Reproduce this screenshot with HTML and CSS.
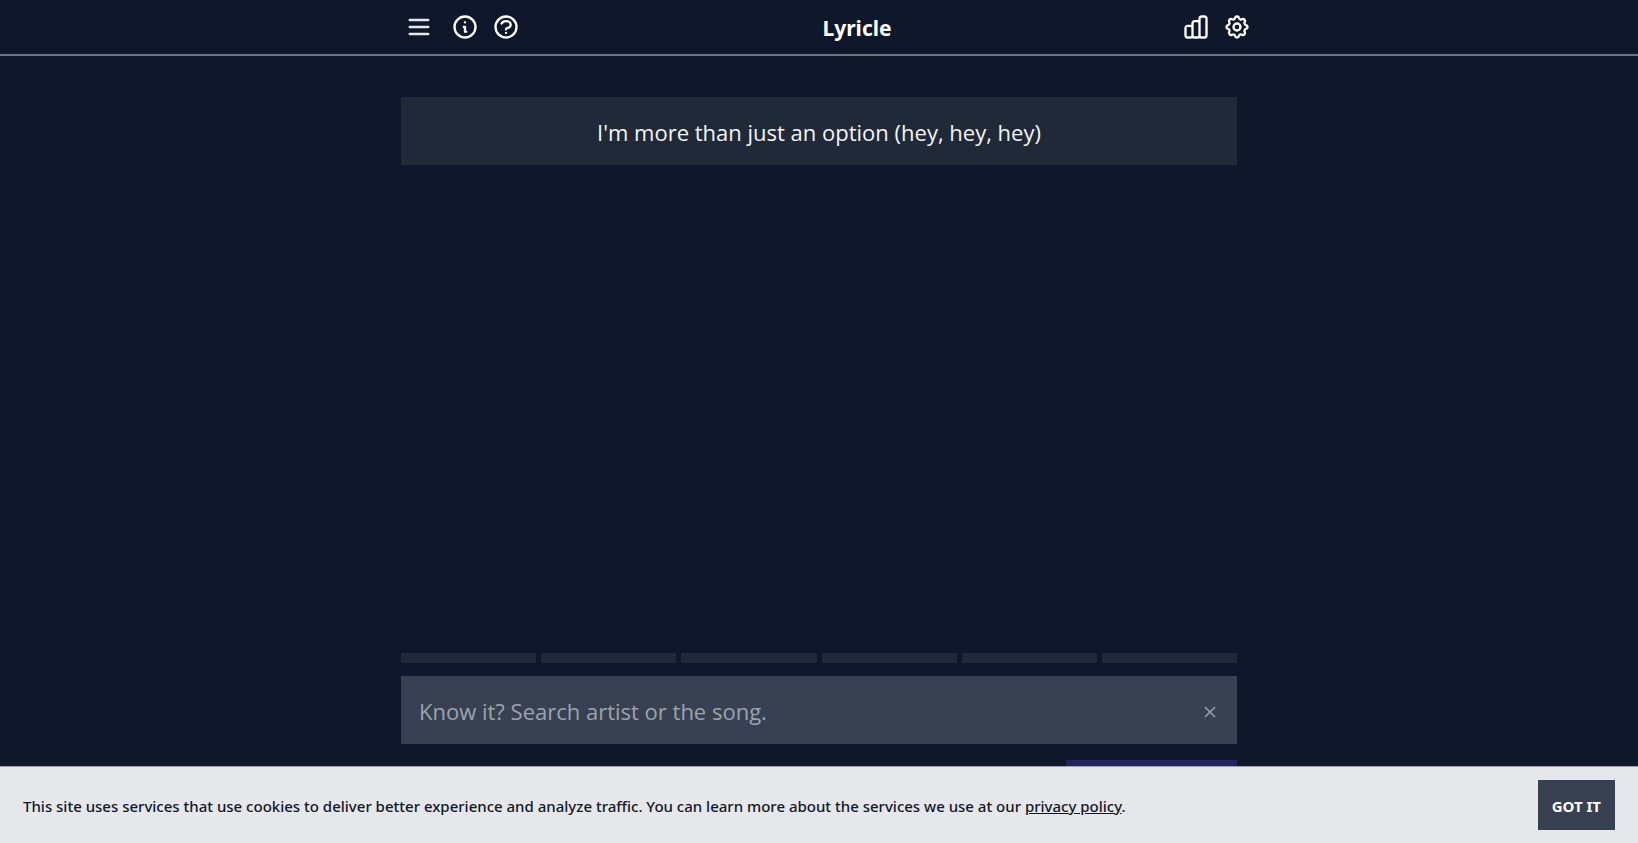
FILE: index.html
```html
<!DOCTYPE html>
<html lang="en">
<head>
<meta charset="utf-8">
<meta name="viewport" content="width=device-width, initial-scale=1">
<title>Lyricle</title>
<link rel="stylesheet" href="styles.css">
</head>
<body>
<header class="header">
  <div class="header-inner">
    <nav class="header-group" aria-label="Main">
      <button class="icon-button icon-button-menu" type="button" aria-label="Menu"><svg class="icon icon-menu" viewBox="0 0 24 24"><path d="M4 6h16M4 12h16M4 18h16"/></svg></button>
      <button class="icon-button" type="button" aria-label="About"><svg class="icon" viewBox="0 0 24 24"><path d="M13 16h-1v-4h-1m1-4h.01M21 12a9 9 0 11-18 0 9 9 0 0118 0z"/></svg></button>
      <button class="icon-button" type="button" aria-label="Help"><svg class="icon" viewBox="0 0 24 24"><path d="M8.228 9c.549-1.165 2.03-2 3.772-2 2.21 0 4 1.343 4 3 0 1.4-1.278 2.575-3.006 2.907-.542.104-.994.54-.994 1.093m0 3h.01M21 12a9 9 0 11-18 0 9 9 0 0118 0z"/></svg></button>
    </nav>
    <h1 class="title">Lyricle</h1>
    <div class="header-group">
      <button class="icon-button" type="button" aria-label="Statistics"><svg class="icon" viewBox="0 0 24 24"><path d="M9 19v-6a2 2 0 00-2-2H5a2 2 0 00-2 2v6a2 2 0 002 2h2a2 2 0 002-2zm0 0V9a2 2 0 012-2h2a2 2 0 012 2v10m-6 0a2 2 0 002 2h2a2 2 0 002-2m0 0V5a2 2 0 012-2h2a2 2 0 012 2v14a2 2 0 01-2 2h-2a2 2 0 01-2-2z"/></svg></button>
      <button class="icon-button" type="button" aria-label="Settings"><svg class="icon" viewBox="0 0 24 24"><path d="M10.325 4.317c.426-1.756 2.924-1.756 3.35 0a1.724 1.724 0 002.573 1.066c1.543-.94 3.31.826 2.37 2.37a1.724 1.724 0 001.065 2.572c1.756.426 1.756 2.924 0 3.35a1.724 1.724 0 00-1.066 2.573c.94 1.543-.826 3.31-2.37 2.37a1.724 1.724 0 00-2.572 1.065c-.426 1.756-2.924 1.756-3.35 0a1.724 1.724 0 00-2.573-1.066c-1.543.94-3.31-.826-2.37-2.37a1.724 1.724 0 00-1.065-2.572c-1.756-.426-1.756-2.924 0-3.35a1.724 1.724 0 001.066-2.573c-.94-1.543.826-3.31 2.37-2.37.996.608 2.296.07 2.572-1.065z"/><path d="M15 12a3 3 0 11-6 0 3 3 0 016 0z"/></svg></button>
    </div>
  </div>
</header>
<main class="game">
  <p class="lyric">I'm more than just an option (hey, hey, hey)</p>
  <div class="controls">
    <div class="attempts">
      <span class="attempt"></span><span class="attempt"></span><span class="attempt"></span><span class="attempt"></span><span class="attempt"></span><span class="attempt"></span>
    </div>
    <div class="search">
      <input class="search-input" type="text" aria-label="Search artist or song" placeholder="Know it? Search artist or the song.">
      <button class="search-clear" type="button" aria-label="Clear"><svg class="clear-icon" viewBox="0 0 12 12"><path d="M1 1l10 10M11 1L1 11"/></svg></button>
    </div>
    <button class="submit" type="button" aria-label="Submit"></button>
  </div>
</main>
<aside class="cookies" aria-label="Cookie notice">
  <p class="cookies-text">This site uses services that use cookies to deliver better experience and analyze traffic. You can learn more about the services we use at our <a class="cookies-link" href="#privacy">privacy policy</a>.</p>
  <button class="cookies-accept" type="button">GOT IT</button>
</aside>
</body>
</html>
```
FILE: styles.css
```css
* {
  box-sizing: border-box;
}

body {
  margin: 0;
  height: 100vh;
  display: flex;
  flex-direction: column;
  overflow: hidden;
  background: #0f172a;
  color: #f3f4f6;
  font-family: "Segoe UI", "Noto Sans", sans-serif;
}

button {
  border: 0;
  padding: 0;
  font: inherit;
  color: inherit;
  background: none;
  cursor: pointer;
}

.header {
  border-bottom: 2px solid #6b7280;
}

.header-inner {
  display: flex;
  align-items: center;
  max-width: 864px;
  height: 54px;
  margin: 0 auto;
  padding-left: 18px;
}

.header-group {
  display: flex;
  gap: 13px;
}

.icon-button {
  display: flex;
}

.icon-button-menu {
  margin-right: 5px;
}

.icon {
  width: 28px;
  height: 28px;
  fill: none;
  stroke: #ffffff;
  stroke-width: 2;
  stroke-linecap: round;
  stroke-linejoin: round;
}

.icon-menu {
  stroke: #e5e7eb;
}

.title {
  flex: 1;
  margin: 0;
  padding: 2px 0 0 12px;
  font-size: 21px;
  line-height: 32px;
  font-weight: 700;
  color: #ffffff;
  text-align: center;
}

.game {
  flex: 1;
  display: flex;
  flex-direction: column;
  justify-content: space-between;
  width: 100%;
  max-width: 836px;
  margin: 0 auto;
  padding-top: 41px;
}

.lyric {
  margin: 0;
  padding: 19px 18px 17px;
  background: #1f2937;
  font-family: "Segoe UI", "Open Sans", sans-serif;
  font-size: 22px;
  line-height: 32px;
  text-align: center;
}

.attempts {
  display: flex;
  gap: 5px;
  margin-bottom: 13px;
}

.attempt {
  flex: 1;
  height: 10px;
  background: #1f2937;
}

.search {
  display: flex;
  align-items: center;
  margin-bottom: 16px;
  padding-right: 21px;
  background: #374151;
}

.search-input {
  flex: 1;
  min-width: 0;
  border: 0;
  outline: 0;
  padding: 19px 18px 17px;
  background: transparent;
  color: #f3f4f6;
  font-family: "Segoe UI", "Open Sans", sans-serif;
  font-size: 22px;
  line-height: 32px;
  height: 68px;
}

.search-input::placeholder {
  color: #9ca3af;
  opacity: 1;
}

.search-clear {
  display: flex;
  padding-top: 4px;
}

.clear-icon {
  width: 12px;
  height: 12px;
  fill: none;
  stroke: #9ca3af;
  stroke-width: 1.5;
}

.submit {
  display: block;
  width: 171px;
  height: 6px;
  margin-left: auto;
  background: #272361;
}

.cookies {
  display: flex;
  align-items: center;
  justify-content: space-between;
  gap: 24px;
  padding: 13px 23px;
  border-top: 1px solid #9ca3af;
  background: #e5e7eb;
  color: #111827;
}

.cookies-text {
  margin: 0;
  padding-top: 2px;
  font-size: 15px;
  line-height: 24px;
  font-weight: 500;
}

.cookies-link {
  color: inherit;
}

.cookies-accept {
  flex: none;
  height: 50px;
  padding: 2px 14px 0;
  background: #374151;
  color: #ffffff;
  font-size: 15px;
  font-weight: 700;
}
```
